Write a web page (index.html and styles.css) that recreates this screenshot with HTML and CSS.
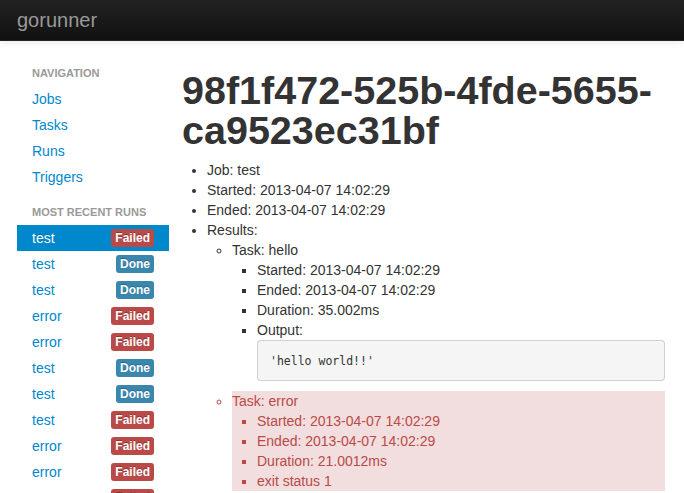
FILE: index.html
```html
<!DOCTYPE html>
<html>
<head>
<meta charset="utf-8">
<title>gorunner</title>
<link rel="stylesheet" href="styles.css">
</head>
<body>
<div class="navbar">
  <a class="brand" href="#">gorunner</a>
</div>
<div class="page">
  <aside class="sidebar">
    <ul class="nav-list">
      <li class="nav-header">Navigation</li>
      <li><a href="#">Jobs</a></li>
      <li><a href="#">Tasks</a></li>
      <li><a href="#">Runs</a></li>
      <li><a href="#">Triggers</a></li>
      <li class="nav-header gap">Most Recent Runs</li>
      <li class="active"><a href="#"><span>test</span><span class="label failed">Failed</span></a></li>
      <li><a href="#"><span>test</span><span class="label done">Done</span></a></li>
      <li><a href="#"><span>test</span><span class="label done">Done</span></a></li>
      <li><a href="#"><span>error</span><span class="label failed">Failed</span></a></li>
      <li><a href="#"><span>error</span><span class="label failed">Failed</span></a></li>
      <li><a href="#"><span>test</span><span class="label done">Done</span></a></li>
      <li><a href="#"><span>test</span><span class="label done">Done</span></a></li>
      <li><a href="#"><span>test</span><span class="label failed">Failed</span></a></li>
      <li><a href="#"><span>error</span><span class="label failed">Failed</span></a></li>
      <li><a href="#"><span>error</span><span class="label failed">Failed</span></a></li>
      <li><a href="#"><span>error</span><span class="label failed">Failed</span></a></li>
    </ul>
  </aside>
  <main class="main">
    <h1>98f1f472-525b-4fde-5655-ca9523ec31bf</h1>
    <ul class="l1">
      <li>Job: test</li>
      <li>Started: 2013-04-07 14:02:29</li>
      <li>Ended: 2013-04-07 14:02:29</li>
      <li>Results:
        <ul class="l2">
          <li>Task: hello
            <ul class="l3">
              <li>Started: 2013-04-07 14:02:29</li>
              <li>Ended: 2013-04-07 14:02:29</li>
              <li>Duration: 35.002ms</li>
              <li>Output:
                <pre>'hello world!!'</pre>
              </li>
            </ul>
          </li>
          <li class="error">Task: error
            <ul class="l3">
              <li>Started: 2013-04-07 14:02:29</li>
              <li>Ended: 2013-04-07 14:02:29</li>
              <li>Duration: 21.0012ms</li>
              <li>exit status 1</li>
            </ul>
          </li>
        </ul>
      </li>
    </ul>
  </main>
</div>
</body>
</html>
```

FILE: styles.css
```css
html, body {
  margin: 0;
  padding: 0;
}
body {
  font-family: "Liberation Sans", Arial, Helvetica, sans-serif;
  font-size: 14px;
  line-height: 20px;
  color: #333333;
  background: #ffffff;
  overflow: hidden;
}
a {
  color: #0088cc;
  text-decoration: none;
}
.navbar {
  height: 40px;
  background: linear-gradient(to bottom, #222222, #111111);
  border-bottom: 1px solid #252525;
  box-shadow: 0 1px 8px rgba(0, 0, 0, 0.1);
  display: flex;
  align-items: center;
  padding-left: 17px;
}
.brand {
  color: #999999;
  font-size: 20px;
  line-height: 20px;
  font-weight: 200;
  margin-top: -1px;
}
.page {
  display: flex;
  padding: 19px 19px 0 17px;
}
.sidebar {
  width: 152px;
  flex: none;
}
.nav-list {
  list-style: none;
  margin: 0;
  padding: 0;
}
.nav-list li a {
  display: flex;
  justify-content: space-between;
  align-items: center;
  padding: 3px 15px;
  line-height: 20px;
}
.nav-header {
  padding: 3px 15px;
  font-size: 11px;
  font-weight: bold;
  line-height: 20px;
  color: #999999;
  text-shadow: 0 1px 0 rgba(255, 255, 255, 0.5);
  text-transform: uppercase;
}
.nav-header.gap {
  margin-top: 9px;
}
.nav-list li.active a {
  background: #0088cc;
  color: #ffffff;
  text-shadow: 0 -1px 0 rgba(0, 0, 0, 0.2);
}
.label {
  display: inline-block;
  padding: 2px 4px;
  font-size: 12px;
  font-weight: bold;
  line-height: 14px;
  color: #ffffff;
  text-shadow: 0 -1px 0 rgba(0, 0, 0, 0.25);
  border-radius: 3px;
  margin-top: -1px;
}
.label.failed {
  background: #b94a48;
}
.label.done {
  background: #3a87ad;
}
.main {
  margin-left: 13px;
  flex: 1;
  min-width: 0;
}
h1 {
  margin: 10px 0 10px;
  font-size: 39.5px;
  line-height: 40px;
  font-weight: bold;
  color: #333333;
  letter-spacing: 0;
}
ul.l1, ul.l2, ul.l3 {
  margin: 0 0 0 25px;
  padding: 0;
}
ul.l1 {
  list-style: disc;
}
ul.l2 {
  list-style: circle;
}
ul.l3 {
  list-style: square;
}
pre {
  margin: 0 0 10px;
  padding: 9.5px 12px;
  font-family: "DejaVu Sans Mono", Consolas, monospace;
  font-size: 11.5px;
  line-height: 20px;
  color: #333333;
  background: #f5f5f5;
  border: 1px solid rgba(0, 0, 0, 0.15);
  border-radius: 4px;
}
li.error {
  background: #f2dede;
  color: #b94a48;
}
```
